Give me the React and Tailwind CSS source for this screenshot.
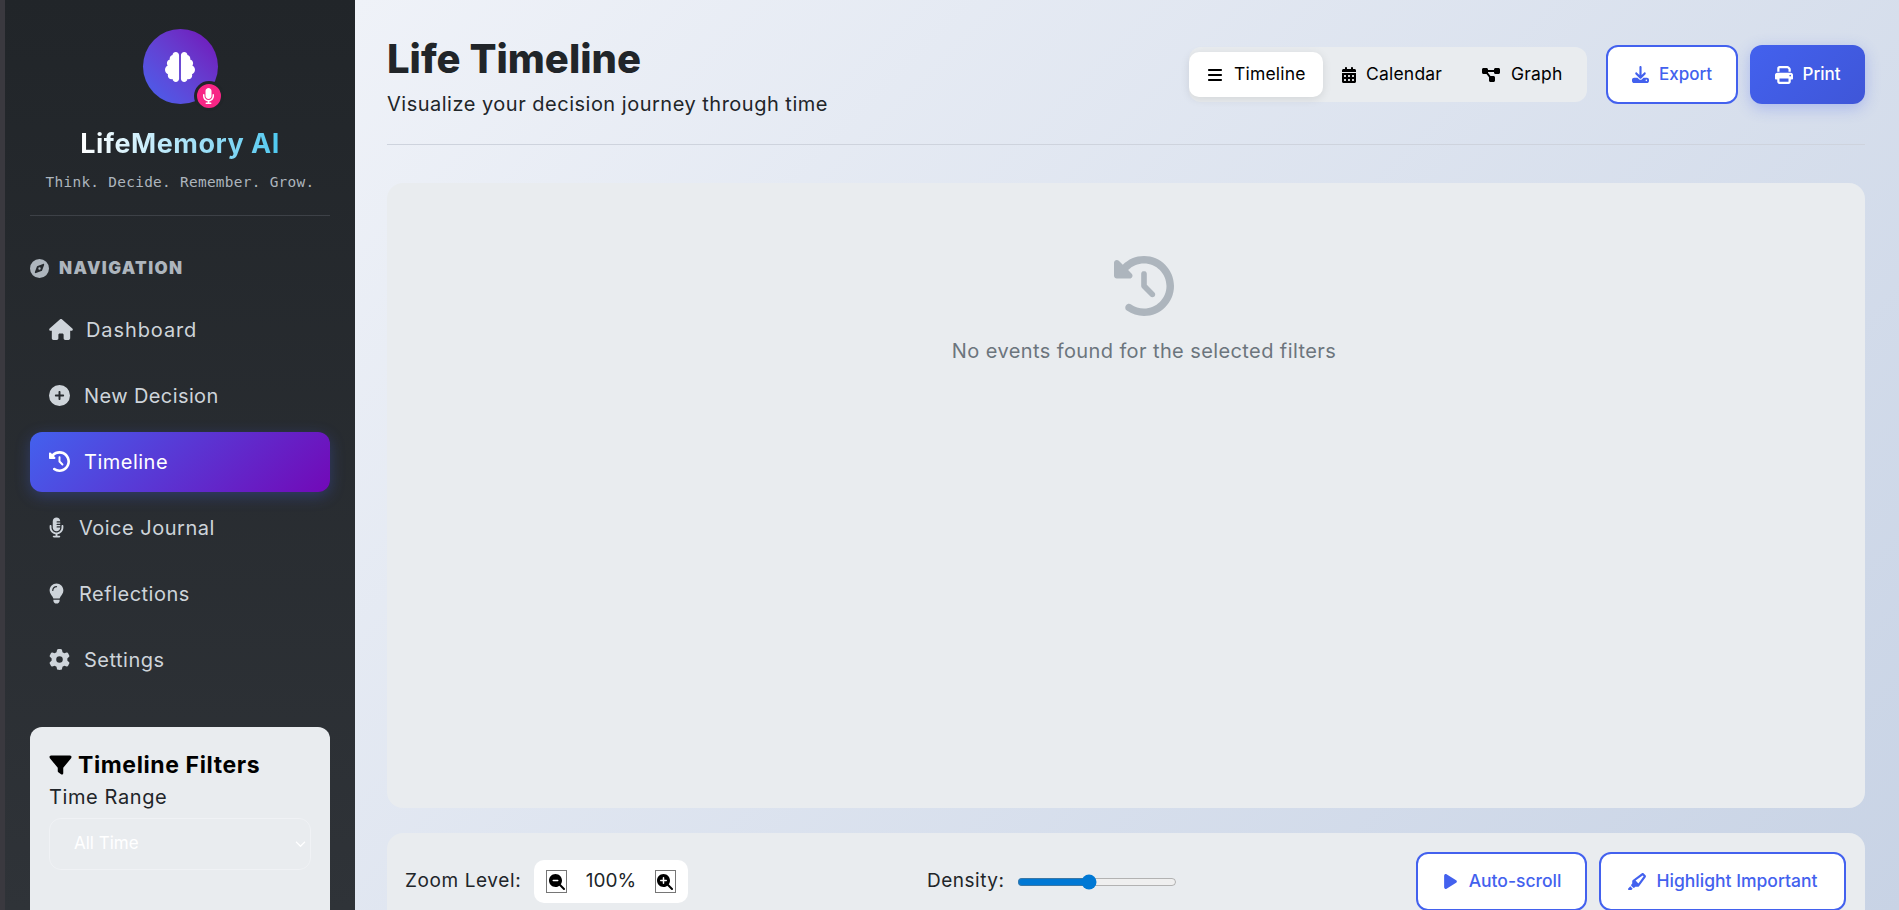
import React from "react";
import { FaBrain, FaMicrophone, FaCompass, FaHouse, FaCirclePlus, FaClockRotateLeft, FaMicrophoneLines, FaLightbulb, FaGear, FaFilter, FaBars, FaCalendarDays, FaDiagramProject, FaDownload, FaPrint, FaMagnifyingGlassMinus, FaMagnifyingGlassPlus, FaPlay, FaHighlighter, FaChevronDown } from "react-icons/fa6";

const nav = [
  { label: "Dashboard", Icon: FaHouse, iconW: "w-[24px]", gap: "gap-[13px] tracking-[0.9px]" },
  { label: "New Decision", Icon: FaCirclePlus, iconW: "w-[21px]", gap: "gap-[14px] tracking-[0.4px]" },
  { label: "Timeline", Icon: FaClockRotateLeft, iconW: "w-[21px]", gap: "gap-[14px] tracking-[0.5px]", active: true },
  { label: "Voice Journal", Icon: FaMicrophoneLines, iconW: "w-[15px]", gap: "gap-[15px] tracking-[0.5px]" },
  { label: "Reflections", Icon: FaLightbulb, iconW: "w-[15px]", gap: "gap-[15px] tracking-[0.5px]" },
  { label: "Settings", Icon: FaGear, iconW: "w-[21px]", gap: "gap-[14px] tracking-[0.5px]" },
];

function NavItem({ item }) {
  const { label, Icon, iconW, gap, active } = item;
  return (
    <div className={`flex h-[60px] items-center ${gap} rounded-xl px-[19px] text-[20px] ${active ? "bg-[linear-gradient(135deg,#4361ee,#7209b7)] text-white shadow-[0_4px_15px_rgba(67,97,238,0.3)]" : "text-[#ced4da]"}`}>
      <Icon className={`${iconW} h-[21px] shrink-0`} />
      <span>{label}</span>
    </div>
  );
}

function ViewTab({ Icon, label, active, className, iconW }) {
  return (
    <div className={`flex h-[45px] items-center rounded-[10px] pl-[19px] text-[17.5px] tracking-[0.2px] text-black ${active ? "bg-white shadow-[0_2px_10px_rgba(0,0,0,0.1)]" : ""} ${className}`}>
      <Icon className={`h-[16px] ${iconW}`} />
      <span>{label}</span>
    </div>
  );
}

function OutlineButton({ Icon, label, className, text = "text-[17.5px]", icon = "h-[17px] w-[17px]" }) {
  return (
    <div className={`flex h-[59px] items-center justify-center gap-[10px] rounded-xl border-2 border-[#4361ee] bg-white font-medium text-[#4361ee] ${text} ${className}`}>
      <Icon className={icon} />
      <span>{label}</span>
    </div>
  );
}

export default function App() {
  return (
    <div className="flex h-screen w-full overflow-hidden bg-[#3a393f] pl-[5px] font-['Inter','Noto_Sans',sans-serif]">
      <aside className="flex h-full w-[350px] shrink-0 flex-col overflow-hidden bg-gradient-to-b from-[#212529] to-[#2f3338] px-[25px]">
        <div className="flex flex-col items-center border-b border-[#3d4147] pb-[23px] pt-[29px]">
          <div className="relative h-[75px] w-[75px] rounded-full bg-gradient-to-tr from-[#4361ee] to-[#7209b7]">
            <div className="flex h-full w-full items-center justify-center">
              <FaBrain className="h-[30px] w-[30px] text-white" />
            </div>
            <div className="absolute left-[51px] top-[52px] flex h-[30px] w-[30px] items-center justify-center rounded-full border-[3px] border-[#212529] bg-[#f72585]">
              <FaMicrophone className="h-[16px] w-[13px] text-white" />
            </div>
          </div>
          <h1 className="mt-[21px] bg-gradient-to-r from-white to-[#4cc9f0] bg-clip-text text-[27px] font-bold leading-[38px] tracking-[0.5px] text-transparent">LifeMemory AI</h1>
          <p className="mt-[9px] font-['DejaVu_Sans_Mono',monospace] text-[14.4px] leading-[20px] tracking-[0.3px] text-[#adb5bd]">Think. Decide. Remember. Grow.</p>
        </div>
        <div className="mt-[40px] flex items-center gap-[10px] text-[#adb5bd]">
          <FaCompass className="h-[19px] w-[19px]" />
          <span className="text-[17px] font-black tracking-[1.4px]">NAVIGATION</span>
        </div>
        <nav className="mt-[18px] flex flex-col gap-[6px]">
          {nav.map((item) => (
            <NavItem key={item.label} item={item} />
          ))}
        </nav>
        <div className="mt-[37px] h-[300px] shrink-0 rounded-xl bg-[#e9ecef] px-[19px] pt-[24px]">
          <div className="flex items-center gap-[6px] text-[23px] font-bold leading-[28px] tracking-[0.6px] text-black">
            <FaFilter className="h-[22px] w-[23px]" />
            <span>Timeline Filters</span>
          </div>
          <div className="mt-[5px] text-[20px] leading-[26px] tracking-[0.6px] text-[#212529]">Time Range</div>
          <div className="mt-[8px] flex h-[52px] items-center justify-between rounded-xl border border-[#f0f2f5] pl-[24px] pr-[4px] text-[17px] text-white">
            <span>All Time</span>
            <FaChevronDown className="h-[11px] w-[11px]" />
          </div>
        </div>
      </aside>
      <main className="h-full min-w-0 flex-1 overflow-hidden bg-[linear-gradient(135deg,#eff2f8_0%,#c8d3e5_100%)] pl-[32px] pr-[34px]">
        <header className="flex h-[145px] items-start justify-between border-b border-[#ced3dd]">
          <div className="pt-[33px]">
            <h2 className="text-[40px] font-extrabold leading-[52px] text-[#212529]">Life Timeline</h2>
            <p className="mt-[5px] text-[20px] leading-[29px] tracking-[0.5px] text-[#212529]">Visualize your decision journey through time</p>
          </div>
          <div className="flex items-center gap-[12px] pt-[45px]">
            <div className="mr-[7px] flex h-[55px] w-[398px] items-center rounded-xl bg-[#e9ecef]">
              <ViewTab Icon={FaBars} iconW="mr-[12px] w-[14px]" label="Timeline" active className="w-[134px]" />
              <ViewTab Icon={FaCalendarDays} iconW="mr-[10px] w-[14px]" label="Calendar" className="w-[139px]" />
              <ViewTab Icon={FaDiagramProject} iconW="mr-[10px] w-[20px]" label="Graph" className="w-[120px]" />
            </div>
            <OutlineButton Icon={FaDownload} label="Export" className="w-[132px]" text="text-[17px]" />
            <div className="flex h-[59px] w-[115px] items-center justify-center gap-[10px] rounded-xl bg-[linear-gradient(135deg,#4361ee,#3f56d8)] text-[17px] font-medium text-white shadow-[0_4px_15px_rgba(67,97,238,0.3)]">
              <FaPrint className="h-[18px] w-[18px]" />
              <span>Print</span>
            </div>
          </div>
        </header>
        <section className="mt-[38px] flex h-[625px] flex-col items-center rounded-2xl bg-[#e9ecef] pl-[36px] pt-[73px]">
          <FaClockRotateLeft className="h-[60px] w-[60px] text-[#adb5bd]" />
          <p className="mt-[21px] text-[20px] leading-[29px] tracking-[0.4px] text-[#6c757d]">No events found for the selected filters</p>
        </section>
        <section className="mt-[25px] flex h-[120px] items-start rounded-2xl bg-[#e9ecef] pl-[18px] pr-[19px] pt-[19px]">
          <div className="flex h-[59px] items-center">
            <span className="w-[129px] text-[19px] tracking-[0.6px] text-[#212529]">Zoom Level:</span>
            <div className="flex h-[43px] w-[154px] items-center justify-between rounded-[10px] bg-white px-[12px] text-[#212529]">
              <button className="flex h-[23px] w-[21px] items-center justify-center border border-[#767676] text-black"><FaMagnifyingGlassMinus className="h-[16px] w-[16px]" /></button>
              <span className="text-[19px]">100%</span>
              <button className="flex h-[23px] w-[21px] items-center justify-center border border-[#767676] text-black"><FaMagnifyingGlassPlus className="h-[16px] w-[16px]" /></button>
            </div>
          </div>
          <div className="ml-[239px] flex h-[59px] items-center gap-[13px]">
            <span className="text-[19px] tracking-[0.5px] text-[#212529]">Density:</span>
            <input type="range" min="0" max="9" defaultValue="4" className="m-0 h-[16px] w-[160px] accent-[#0078d4]" />
          </div>
          <div className="ml-auto flex items-center gap-[12px]">
            <OutlineButton Icon={FaPlay} label="Auto-scroll" className="w-[171px]" />
            <OutlineButton Icon={FaHighlighter} label="Highlight Important" className="w-[247px]" icon="h-[19px] w-[19px]" />
          </div>
        </section>
      </main>
    </div>
  );
}
